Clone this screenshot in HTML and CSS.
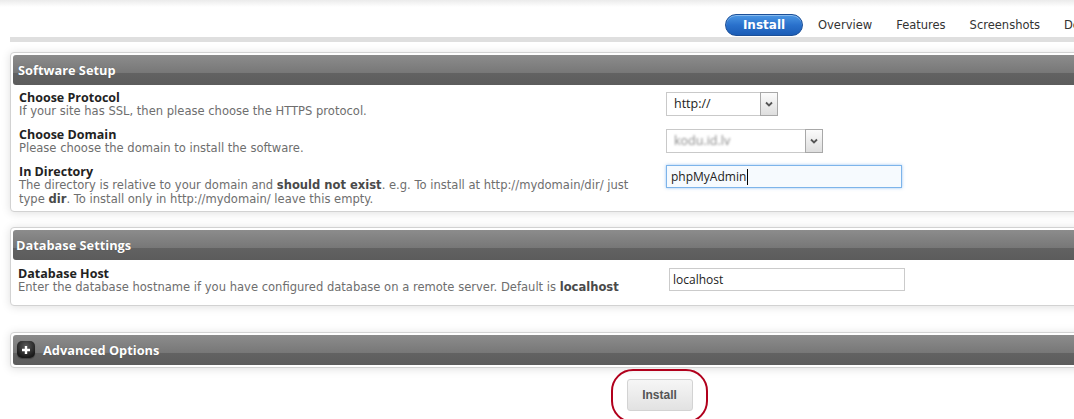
FILE: index.html
```html
<!DOCTYPE html>
<html lang="en">
<head>
<meta charset="utf-8">
<title>Install</title>
<link rel="stylesheet" href="styles.css">
</head>
<body>
<div class="page">
  <div class="topbar">
    <nav class="tabs">
      <a class="tab tab-active">Install</a>
      <a class="tab">Overview</a>
      <a class="tab">Features</a>
      <a class="tab">Screenshots</a>
      <a class="tab">Demo</a>
      <a class="tab">Ratings</a>
    </nav>
  </div>
  <div class="rule"></div>

  <section class="panel">
    <div class="panel-head">Software Setup</div>
    <div class="panel-body body-setup">
      <div class="row">
        <div class="label-col">
          <div class="label">Choose Protocol</div>
          <div class="desc">If your site has SSL, then please choose the HTTPS protocol.</div>
        </div>
        <div class="field-col">
          <div class="select select-proto">
            <span class="select-value">http://</span>
            <span class="select-arrow"><svg width="8" height="6" viewBox="0 0 8 6"><path d="M1 1.5 L4 4.5 L7 1.5" fill="none" stroke="#555" stroke-width="1.8"/></svg></span>
          </div>
        </div>
      </div>
      <div class="row">
        <div class="label-col">
          <div class="label">Choose Domain</div>
          <div class="desc">Please choose the domain to install the software.</div>
        </div>
        <div class="field-col">
          <div class="select select-domain">
            <span class="select-value"><span class="blurred">kodu.id.lv</span></span>
            <span class="select-arrow"><svg width="8" height="6" viewBox="0 0 8 6"><path d="M1 1.5 L4 4.5 L7 1.5" fill="none" stroke="#555" stroke-width="1.8"/></svg></span>
          </div>
        </div>
      </div>
      <div class="row">
        <div class="label-col">
          <div class="label">In Directory</div>
          <div class="desc">The directory is relative to your domain and <b>should not exist</b>. e.g. To install at http://mydomain/dir/ just type <b>dir</b>. To install only in http://mydomain/ leave this empty.</div>
        </div>
        <div class="field-col">
          <div class="textbox textbox-focus">phpMyAdmin<span class="caret"></span></div>
        </div>
      </div>
    </div>
  </section>

  <section class="panel panel-db">
    <div class="panel-head head-db">Database Settings</div>
    <div class="panel-body body-db">
      <div class="row">
        <div class="label-col label-col-db">
          <div class="label">Database Host</div>
          <div class="desc">Enter the database hostname if you have configured database on a remote server. Default is <b>localhost</b></div>
        </div>
        <div class="field-col">
          <div class="textbox">localhost</div>
        </div>
      </div>
    </div>
  </section>

  <section class="panel panel-adv">
    <div class="panel-head head-adv">
      <span class="plus-icon"><svg width="10" height="10" viewBox="0 0 10 10"><path d="M5 1 V9 M1 5 H9" stroke="#fff" stroke-width="2.4"/></svg></span>
      Advanced Options
    </div>
  </section>

  <div class="actions">
    <div class="highlight">
      <button class="btn">Install</button>
    </div>
  </div>
</div>
</body>
</html>
```
FILE: styles.css
```css
html, body {
  margin: 0;
  padding: 0;
}
body {
  width: 1074px;
  height: 419px;
  overflow: hidden;
  background: linear-gradient(#ebebeb, #ffffff 7px) no-repeat #fff;
  font-family: "Open Sans", "DejaVu Sans", sans-serif;
}
.page {
  width: 1298px;
  margin-left: 10px;
}

/* tabs */
.topbar {
  height: 37px;
  box-sizing: border-box;
  padding-top: 14px;
  padding-left: 715px;
}
.tabs {
  display: flex;
  align-items: center;
  white-space: nowrap;
}
.tab {
  font-family: "DejaVu Sans", Verdana, sans-serif;
  font-size: 11.5px;
  color: #333;
  padding: 0 12px;
  line-height: 22px;
}
.tab-active {
  box-sizing: border-box;
  width: 78px;
  height: 22px;
  padding: 0;
  margin-right: 3px;
  text-align: center;
  border-radius: 11px;
  border: 1px solid #1b4f98;
  background: linear-gradient(#4b97e4, #2a71cc 50%, #1a5cb6);
  color: #fff;
  font-weight: bold;
  font-size: 12px;
  line-height: 20px;
  box-shadow: inset 0 1px 0 rgba(255,255,255,.35);
}
.rule {
  height: 5px;
  background: #dfdfdf;
}

/* panels */
.panel {
  margin-top: 10px;
  border: 1px solid #d2d2d2;
  border-radius: 4px;
  padding: 2px;
  background: #fff;
  box-shadow: 0 1px 10px rgba(0,0,0,.13);
}
.panel-db {
  margin-top: 15px;
}
.panel-adv {
  margin-top: 26px;
}
.panel-head {
  height: 30px;
  border-radius: 3px;
  background: linear-gradient(#8c8c8c, #777777 60%, #626262 60%, #5c5c5c);
  color: #fff;
  font-weight: bold;
  font-size: 12.8px;
  line-height: 30px;
  padding-left: 5px;
  text-shadow: 0 0 1px rgba(0,0,0,.35);
}
.head-db {
  padding-left: 3px;
}
.head-adv {
  display: flex;
  align-items: center;
  gap: 8px;
  padding-left: 4px;
}
.plus-icon {
  width: 18px;
  height: 17px;
  border-radius: 5px;
  background: radial-gradient(circle at 50% 30%, #5a5a5a, #1a1a1a 75%);
  display: flex;
  align-items: center;
  justify-content: center;
  box-shadow: 0 1px 1px rgba(0,0,0,.3);
}

.panel-body {
  padding: 6px 0 3px 6px;
}
.body-db {
  padding: 7px 0 8px 5px;
}
.row {
  display: flex;
  align-items: flex-start;
}
.row + .row {
  margin-top: 9.5px;
}
.label-col {
  width: 647px;
  box-sizing: border-box;
  padding-right: 24px;
  flex: none;
}
.label-col-db {
  width: 651px;
  padding-right: 0;
}
.label {
  font-weight: bold;
  font-size: 12.5px;
  line-height: 14px;
  color: #222;
}
.desc {
  font-family: "DejaVu Sans", Verdana, sans-serif;
  font-size: 11.55px;
  line-height: 13.5px;
  color: #6e6e6e;
}
.desc b {
  color: #4a4a4a;
}
.field-col {
  padding-top: 1px;
}

/* select */
.select {
  display: flex;
  box-sizing: border-box;
  height: 24px;
  border: 1px solid #c9c9c9;
  background: #fff;
}
.select-proto {
  width: 112px;
}
.select-domain {
  width: 157px;
}
.select-value {
  flex: 1;
  padding-left: 7px;
  font-size: 12.5px;
  line-height: 22px;
  color: #222;
}
.blurred {
  color: #8a8a8a;
  filter: blur(1.3px);
}
.select-arrow {
  width: 16px;
  margin: -1px -1px -1px 0;
  border: 1px solid #a8a8a8;
  background: linear-gradient(#fbfbfb, #dedede);
  display: flex;
  align-items: center;
  justify-content: center;
}

/* text inputs */
.textbox {
  box-sizing: border-box;
  width: 236px;
  height: 23px;
  border: 1px solid #cbcbcb;
  padding-left: 3px;
  font-size: 12px;
  line-height: 21px;
  color: #222;
  background: #fff;
  display: flex;
  align-items: center;
}
.textbox-focus {
  border-color: #7db4ea;
  background: #f6fafe;
  box-shadow: 0 0 3px rgba(110,170,235,.7);
  padding-left: 4px;
  margin-top: -1px;
}
.caret {
  width: 1px;
  height: 16px;
  background: #000;
  margin-left: 1px;
}

/* bottom button */
.actions {
  display: flex;
  justify-content: center;
  margin-top: 1px;
}
.highlight {
  border: 2.5px solid #b1001c;
  border-radius: 22px;
  padding: 8px 13px 4px 14px;
  height: 38px;
}
.btn {
  box-sizing: border-box;
  width: 66px;
  height: 32px;
  border: 1px solid #d3d3d3;
  border-radius: 3px;
  background: linear-gradient(#f6f6f6, #e2e2e2);
  font-family: "Liberation Sans", Arial, sans-serif;
  font-weight: bold;
  font-size: 12px;
  color: #555;
  padding: 0;
}
```
